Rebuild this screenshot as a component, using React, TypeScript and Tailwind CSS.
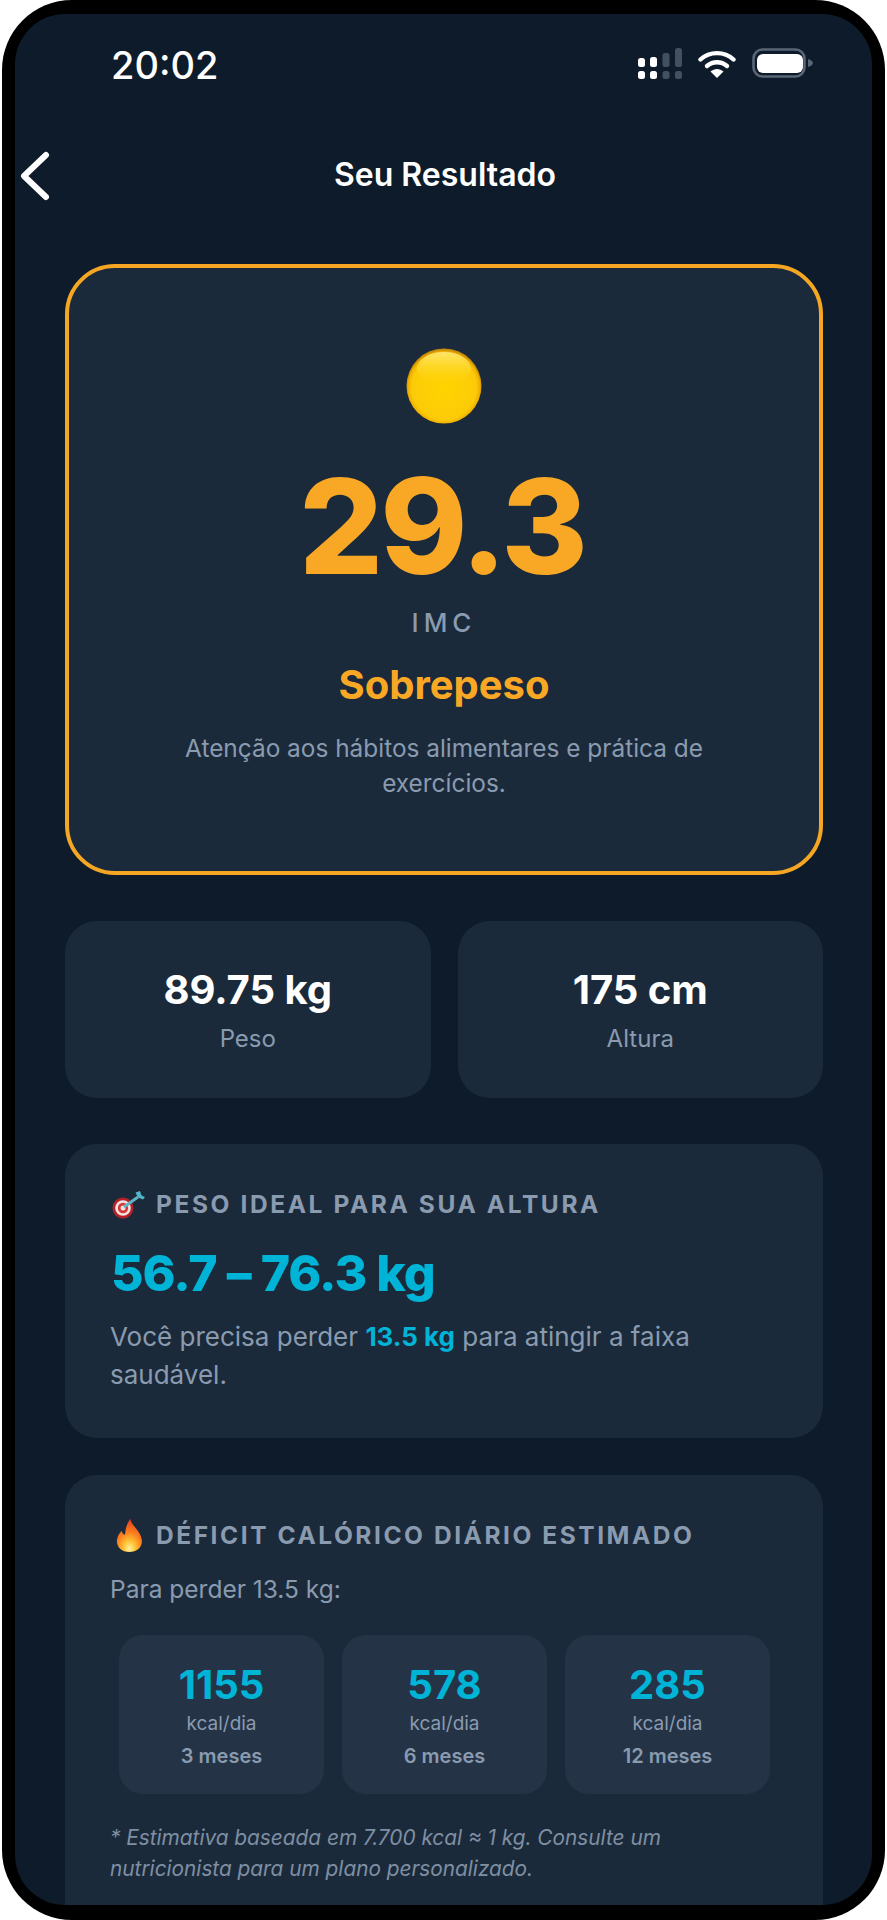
function SignalIcon() {
  return (
    <svg width="44" height="31" viewBox="0 0 44 31">
      <rect x="0" y="10" width="7" height="9" rx="2.5" fill="#fff" />
      <rect x="12" y="9" width="7" height="10" rx="2.5" fill="#fff" />
      <rect x="0" y="23" width="7" height="8" rx="2.5" fill="#fff" />
      <rect x="12" y="23" width="7" height="8" rx="2.5" fill="#fff" />
      <rect x="24.500" y="5" width="7" height="14" rx="2.500" fill="#43505f" />
      <rect x="37" y="0" width="7" height="19" rx="2.500" fill="#43505f" />
      <rect x="24.500" y="23" width="7" height="8" rx="2.500" fill="#43505f" />
      <rect x="37" y="23" width="7" height="8" rx="2.500" fill="#43505f" />
    </svg>
  );
}

function WifiIcon() {
  return (
    <svg width="38" height="28" viewBox="0 0 38 28">
      <path d="M2.500 9.500C11.500 1 26.500 1 35.500 9.500" fill="none" stroke="#fff" strokeWidth="4.400" strokeLinecap="round" />
      <path d="M9 16C14.800 11 23.200 11 29 16" fill="none" stroke="#fff" strokeWidth="4.400" strokeLinecap="round" />
      <path d="M12.500 21.500C16.500 18 21.500 18 25.500 21.500L19 28Z" fill="#fff" />
    </svg>
  );
}

function BatteryIcon() {
  return (
    <svg width="61" height="30" viewBox="0 0 61 30">
      <rect x="1.500" y="1.500" width="51" height="27" rx="9" fill="none" stroke="#5a6675" strokeWidth="2.600" />
      <rect x="5" y="6" width="46" height="19" rx="6" fill="#fff" />
      <path d="M56 11C59 12 61 13.500 61 15C61 16.500 59 18 56 19Z" fill="#5a6675" />
    </svg>
  );
}

function YellowCircle() {
  return (
    <svg width="76" height="76" viewBox="0 0 76 76">
      <defs>
        <radialGradient id="sun" cx="0.5" cy="0.52" r="0.5">
          <stop offset="0" stopColor="#ffd400" />
          <stop offset="0.86" stopColor="#fccb08" />
          <stop offset="0.96" stopColor="#eeb000" />
          <stop offset="1" stopColor="#c98e06" />
        </radialGradient>
        <linearGradient id="sunTop" x1="0" y1="0" x2="0" y2="1">
          <stop offset="0" stopColor="#ffec80" stopOpacity="0.85" />
          <stop offset="1" stopColor="#ffd400" stopOpacity="0" />
        </linearGradient>
      </defs>
      <circle cx="38" cy="38" r="37.500" fill="url(#sun)" />
      <ellipse cx="38" cy="21" rx="27" ry="17" fill="url(#sunTop)" />
    </svg>
  );
}

function TargetEmoji() {
  return (
    <svg width="34" height="30" viewBox="0 0 34 30">
      <circle cx="12" cy="19" r="10.500" fill="#b3202a" />
      <circle cx="12" cy="19" r="7.800" fill="#f3e3dc" />
      <circle cx="12" cy="19" r="5.200" fill="#d8343a" />
      <circle cx="12" cy="19" r="2.500" fill="#f3e3dc" />
      <path d="M13 18L27 8" stroke="#5fb4c4" strokeWidth="2.800" />
      <path d="M24.500 3.500L27 8.500L32 10.500L34 8L30.500 6.500L29 2Z" fill="#4fb5c8" />
    </svg>
  );
}

function FireEmoji() {
  return (
    <svg width="32" height="36" viewBox="0 0 32 36">
      <defs>
        <radialGradient id="flame" cx="0.5" cy="0.9" r="0.85">
          <stop offset="0" stopColor="#fff3a0" />
          <stop offset="0.28" stopColor="#ffc233" />
          <stop offset="0.6" stopColor="#fb7d1e" />
          <stop offset="1" stopColor="#e8431f" />
        </radialGradient>
      </defs>
      <path
        transform="translate(4 2) scale(0.96 0.97)"
        d="M16 0C17 7 27 12 28 22C28.500 29 23 34 15 34C7 34 1.500 29 2 22C2.500 17 5 14 7 12C7.500 15 9 16 10.500 16C11 10 12 5 16 0Z"
        fill="url(#flame)"
      />
    </svg>
  );
}

function Tile({ value, period }: { value: string; period: string }) {
  return (
    <div className="flex h-[159px] flex-col items-center rounded-[24px] bg-[#243345] pt-[28px]">
      <div className="text-[40px] leading-[44px] font-bold text-[#00b4d8]">{value}</div>
      <div className="mt-[4px] text-[19px] leading-[26px] text-[#8a9bb0]">kcal/dia</div>
      <div className="mt-[6px] text-[20px] leading-[26px] font-semibold text-[#8a9bb0]">{period}</div>
    </div>
  );
}

export default function App() {
  return (
    <div className="h-[1920px] w-[887px] bg-white px-[2px] font-['Inter',sans-serif]">
      <div className="h-full rounded-[70px] bg-black pt-[14px] pr-[13px] pl-[13px]">
        <div className="h-[1891px] overflow-hidden rounded-[50px] bg-[#0d1b2a] text-white">
          <div className="flex h-[73px] items-end justify-between pr-[59px] pl-[96px]">
            <span className="text-[38px] leading-[44px] font-medium">20:02</span>
            <div className="flex items-start gap-[16px] pb-[8px]">
              <SignalIcon />
              <div className="pt-[2px]">
                <WifiIcon />
              </div>
              <BatteryIcon />
            </div>
          </div>

          <div className="relative mt-[58px] flex h-[60px] items-center justify-center">
            <svg className="absolute top-[6px] left-[2px]" width="36" height="50" viewBox="0 0 36 50">
              <path d="M29 4L7 25L29 46" fill="none" stroke="#fff" strokeWidth="6" strokeLinecap="round" strokeLinejoin="round" />
            </svg>
            <h1 className="pl-[3px] text-[32px] leading-[40px] font-semibold">Seu Resultado</h1>
          </div>

          <div className="mt-[59px] pr-[49px] pl-[50px]">
            <div className="flex h-[611px] flex-col items-center rounded-[50px] border-[4px] border-[#f5a623] bg-[#1b2a3a] pt-[80px]">
              <YellowCircle />
              <div className="mt-[32px] pr-[4px] text-[132px] leading-[140px] font-extrabold tracking-[-3px] text-[#f9a825]">29.3</div>
              <div className="mt-[9px] text-[26px] leading-[36px] font-medium tracking-[5px] text-[#8a9bb0]">IMC</div>
              <div className="mt-[19px] text-[40px] leading-[50px] font-bold text-[#f9a825]">Sobrepeso</div>
              <p className="mt-[21px] w-[560px] text-center text-[24.400px] leading-[35px] text-[#8a9bb0]">
                Atenção aos hábitos alimentares e prática de exercícios.
              </p>
            </div>

            <div className="mt-[46px] grid grid-cols-2 gap-[27px]">
              <div className="flex h-[177px] flex-col items-center rounded-[32px] bg-[#1b2a3a] pt-[44px]">
                <div className="text-[40px] leading-[50px] font-bold">89.75 kg</div>
                <div className="mt-[8px] text-[24px] leading-[32px] text-[#8a9bb0]">Peso</div>
              </div>
              <div className="flex h-[177px] flex-col items-center rounded-[32px] bg-[#1b2a3a] pt-[44px]">
                <div className="text-[40px] leading-[50px] font-bold">175 cm</div>
                <div className="mt-[8px] text-[24px] leading-[32px] text-[#8a9bb0]">Altura</div>
              </div>
            </div>

            <div className="mt-[46px] h-[294px] rounded-[32px] bg-[#1b2a3a] pt-[43px] pl-[46px]">
              <div className="flex h-[34px] items-center gap-[11px] text-[24.500px] font-bold tracking-[2.600px] text-[#8a9bb0]">
                <TargetEmoji />
                <span>PESO IDEAL PARA SUA ALTURA</span>
              </div>
              <div className="mt-[22px] text-[50px] leading-[60px] font-extrabold tracking-[-1px] text-[#00b4d8]">56.7 – 76.3 kg</div>
              <p className="mt-[15px] -ml-[1px] w-[640px] text-[26px] leading-[38px] text-[#8a9bb0]">
                Você precisa perder <span className="font-bold text-[#00b4d8]">13.5 kg</span> para atingir a faixa saudável.
              </p>
            </div>

            <div className="mt-[37px] h-[500px] rounded-[32px] bg-[#1b2a3a] pt-[43px] pl-[46px]">
              <div className="flex h-[34px] items-center gap-[13px] text-[24.500px] font-bold tracking-[2.550px] text-[#8a9bb0]">
                <FireEmoji />
                <span>DÉFICIT CALÓRICO DIÁRIO ESTIMADO</span>
              </div>
              <div className="mt-[21px] -ml-[1px] text-[24.500px] leading-[32px] text-[#8a9bb0]">Para perder 13.5 kg:</div>
              <div className="mt-[30px] ml-[8px] grid w-[651px] grid-cols-3 gap-[18px]">
                <Tile value="1155" period="3 meses" />
                <Tile value="578" period="6 meses" />
                <Tile value="285" period="12 meses" />
              </div>
              <p className="mt-[28px] -ml-[1px] w-[660px] text-[20.800px] leading-[31px] text-[#7f8fa3] italic">
                * Estimativa baseada em 7.700 kcal ≈ 1 kg. Consulte um nutricionista para um plano personalizado.
              </p>
            </div>
          </div>
        </div>
      </div>
    </div>
  );
}
